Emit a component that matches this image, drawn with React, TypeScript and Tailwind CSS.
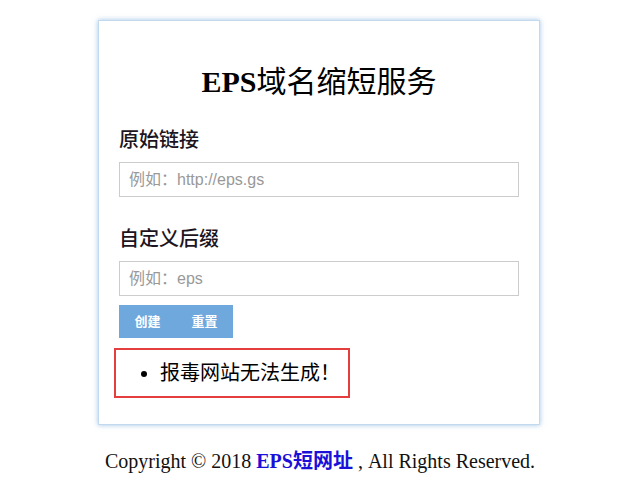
import React from 'react';

const serif = "font-['Liberation_Serif','Noto_Sans_CJK_SC',serif]";
const sans = "font-['Liberation_Sans','Noto_Sans_CJK_SC',sans-serif]";

const App: React.FC = () => {
  return (
    <div className={`min-h-screen bg-white ${serif}`}>
      <div className="pr-[2px] pt-[20px]">
        <div className="mx-auto w-[442px] border border-[#c2d9ee] bg-white px-[20px] pt-[43px] pb-[26px] shadow-[0_0_5px_rgba(120,170,220,0.7)]">
          <h1 className="text-center text-[30px] leading-[36px] text-black">
            <span className="font-bold">EPS</span>
            <span className="font-normal">域名缩短服务</span>
          </h1>

          <label className={`mt-[26px] block text-[20px] font-medium leading-[28px] text-[#1c1420] ${sans}`}>原始链接</label>
          <input
            className={`mt-[8px] block h-[35px] w-full border border-[#cccccc] pl-[9px] text-[16px] text-[#555] outline-none placeholder:text-[#999] ${sans}`}
            placeholder="例如：http://eps.gs"
          />

          <label className={`mt-[28px] block text-[20px] font-medium leading-[28px] text-[#1c1420] ${sans}`}>自定义后缀</label>
          <input
            className={`mt-[8px] block h-[35px] w-full border border-[#cccccc] pl-[9px] text-[16px] text-[#555] outline-none placeholder:text-[#999] ${sans}`}
            placeholder="例如：eps"
          />

          <div className={`mt-[9px] flex ${sans}`}>
            <button className="h-[33px] w-[57px] bg-[#6fa8dc] text-[13px] font-bold text-white">创建</button>
            <button className="h-[33px] w-[57px] bg-[#6fa8dc] text-[13px] font-bold text-white">重置</button>
          </div>

          <ul className={`-ml-[5px] mt-[10px] w-[236px] list-disc border-2 border-[#e53e3e] py-[9px] pl-[44px] text-[20px] leading-[28px] text-black ${sans}`}>
            <li>报毒网站无法生成！</li>
          </ul>
        </div>
      </div>

      <p className="mt-[22px] text-center text-[20px] leading-[28px] text-[#111]">
        Copyright © 2018 <a className="font-bold text-[#1a10d8]">EPS短网址</a> , All Rights Reserved.
      </p>
    </div>
  );
};

export default App;
